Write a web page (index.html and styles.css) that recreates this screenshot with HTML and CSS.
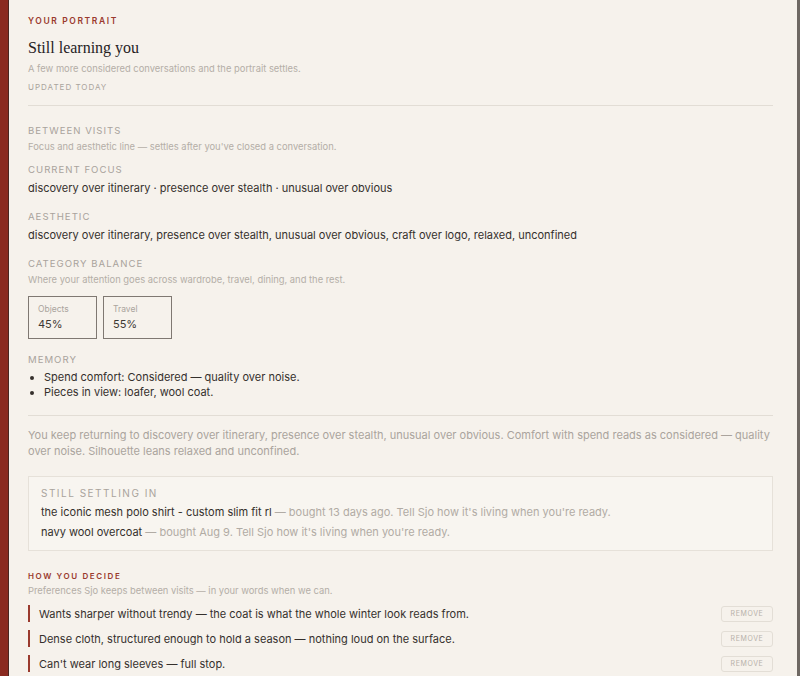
FILE: index.html
```html
<!DOCTYPE html>
<html>
<head>
	<title>Your portrait</title>
	<meta name="viewport" content="width=device-width, initial-scale=1">
	<link rel="stylesheet" href="styles.css">
</head>
<body>

	<div id="portrait">

		<header class="intro">
			<div class="eyebrow">YOUR PORTRAIT</div>
			<h2 class="title">Still learning you</h2>
			<p class="hint">A few more considered conversations and the portrait settles.</p>
			<div class="stamp">UPDATED TODAY</div>
		</header>

		<section class="block">
			<div class="label">BETWEEN VISITS</div>
			<p class="hint">Focus and aesthetic line — settles after you've closed a conversation.</p>

			<div class="label spaced">CURRENT FOCUS</div>
			<p class="value">discovery over itinerary · presence over stealth · unusual over obvious</p>

			<div class="label spaced-lg">AESTHETIC</div>
			<p class="value">discovery over itinerary, presence over stealth, unusual over obvious, craft over logo, relaxed, unconfined</p>

			<div class="label spaced-lg">CATEGORY BALANCE</div>
			<p class="hint">Where your attention goes across wardrobe, travel, dining, and the rest.</p>
			<div class="balance">
				<div class="tile">
					<div class="tile-name">Objects</div>
					<div class="tile-num">45%</div>
				</div>
				<div class="tile">
					<div class="tile-name">Travel</div>
					<div class="tile-num">55%</div>
				</div>
			</div>

			<div class="label spaced-lg">MEMORY</div>
			<ul class="memory">
				<li>Spend comfort: Considered — quality over noise.</li>
				<li>Pieces in view: loafer, wool coat.</li>
			</ul>
		</section>

		<section class="summary">
			<p>You keep returning to discovery over itinerary, presence over stealth, unusual over obvious. Comfort with spend reads as considered — quality over noise. Silhouette leans relaxed and unconfined.</p>
		</section>

		<div class="settling">
			<div class="label">STILL SETTLING IN</div>
			<p><span class="item">the iconic mesh polo shirt - custom slim fit rl</span> — bought 13 days ago. Tell Sjo how it's living when you're ready.</p>
			<p><span class="item">navy wool overcoat</span> — bought Aug 9. Tell Sjo how it's living when you're ready.</p>
		</div>

		<section class="decide">
			<div class="eyebrow">HOW YOU DECIDE</div>
			<p class="hint">Preferences Sjo keeps between visits — in your words when we can.</p>
			<div class="pref">
				<span>Wants sharper without trendy — the coat is what the whole winter look reads from.</span>
				<button class="remove">REMOVE</button>
			</div>
			<div class="pref">
				<span>Dense cloth, structured enough to hold a season — nothing loud on the surface.</span>
				<button class="remove">REMOVE</button>
			</div>
			<div class="pref">
				<span>Can't wear long sleeves — full stop.</span>
				<button class="remove">REMOVE</button>
			</div>
		</section>

	</div>

</body>
</html>
```

FILE: styles.css
```css
*{
	box-sizing: border-box;
}

html, body {
	margin: 0;
	height: 100%;
}

body {
	background-color: #f6f2ec;
	font-family: Inter, "Liberation Sans", sans-serif;
	color: #37322e;
	overflow: hidden;
}

p {
	margin: 0;
}

#portrait {
	min-height: 100%;
	border-left: 8px solid #8a2a20;
	box-shadow: inset 1px 0 0 #4a2620;
	border-right: 3px solid #6e6863;
	padding: 16px 24px 0 20px;
}

.eyebrow {
	font-size: 8.5px;
	font-weight: 600;
	letter-spacing: 1.6px;
	color: #9a3a2e;
}

.title {
	font-family: "Liberation Serif", "DejaVu Serif", serif;
	font-weight: normal;
	font-size: 16px;
	color: #26221f;
	margin: 13px 0 6px;
}

.hint {
	font-size: 9.4px;
	color: #b4aea7;
	line-height: 12px;
}

.stamp {
	font-size: 8px;
	letter-spacing: 1px;
	color: #aaa49d;
	margin-top: 7px;
	padding-bottom: 13px;
	border-bottom: 1px solid #e2ddd5;
}

.block {
	padding-top: 19px;
	padding-bottom: 15px;
	border-bottom: 1px solid #e2ddd5;
}

.label {
	font-size: 9.6px;
	letter-spacing: 1px;
	color: #a9a39c;
	line-height: 12px;
}

.label + .hint {
	margin-top: 4px;
}

.spaced {
	margin-top: 11px;
}

.spaced-lg {
	margin-top: 15px;
}

.value {
	font-size: 11px;
	line-height: 14px;
	margin-top: 5px;
	color: #35302c;
}

.value + .spaced-lg {
	margin-top: 16px;
}

.balance {
	display: flex;
	gap: 6px;
	margin-top: 10px;
}

.tile {
	width: 69px;
	height: 43px;
	border: 1px solid #7f7872;
	padding: 7px 9px;
}

.tile-name {
	font-size: 8.5px;
	color: #aaa49d;
}

.tile-num {
	font-size: 11px;
	color: #3d3834;
	margin-top: 3px;
}

.memory {
	margin: 4px 0 0;
	padding-left: 16px;
	font-size: 11px;
	line-height: 15px;
	color: #35302c;
}

.summary {
	padding-top: 11px;
	font-size: 11px;
	line-height: 16px;
	color: #aaa49d;
}

.settling {
	margin-top: 17px;
	border: 1px solid #e6e1d9;
	background-color: #f8f5f0;
	padding: 10px 12px 11px;
}

.settling .label {
	font-size: 10px;
	letter-spacing: 1.5px;
}

.settling p {
	font-size: 11px;
	line-height: 14px;
	margin-top: 6px;
	color: #b1aba4;
}

.settling .item {
	color: #35302c;
}

.decide {
	padding-top: 20px;
}

.decide .eyebrow {
	font-size: 8px;
	letter-spacing: 1.6px;
}

.decide .hint {
	margin-top: 4px;
	margin-bottom: 8px;
}

.pref {
	display: flex;
	align-items: center;
	justify-content: space-between;
	border-left: 2px solid #9a3a2e;
	padding-left: 9px;
	height: 17px;
	margin-bottom: 8px;
	font-size: 11px;
	color: #35302c;
}

.remove {
	font-family: Inter, "Liberation Sans", sans-serif;
	font-size: 7px;
	letter-spacing: 0.6px;
	color: #b7b1aa;
	background: transparent;
	border: 1px solid #e3ded6;
	border-radius: 3px;
	width: 52px;
	height: 16px;
	padding: 0;
	cursor: pointer;
}
```
